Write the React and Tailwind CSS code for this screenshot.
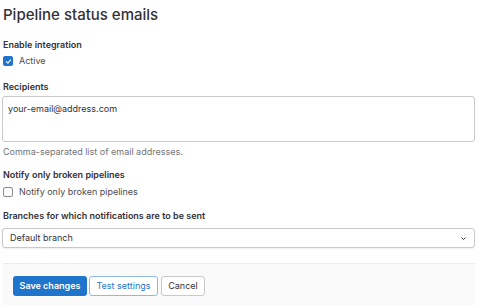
import React from "react";

const Check = () => (
  <svg viewBox="0 0 10 10" className="w-[7px] h-[7px]">
    <path d="M2 5.2 L4.1 7.2 L8 2.8" fill="none" stroke="white" strokeWidth="1.6" strokeLinecap="round" strokeLinejoin="round" />
  </svg>
);

const Label = ({ children, className = "" }) => (
  <div className={`h-[12px] leading-[12px] text-[9px] font-semibold text-[#333238] ${className}`}>{children}</div>
);

const App = () => {
  return (
    <div className="w-[486px] h-[305px] overflow-hidden bg-white font-['Inter',sans-serif] text-[#333238]">
      <div className="ml-[3px] w-[472px] pt-[3px]">
        <h1 className="h-[24px] leading-[24px] text-[15px] font-medium">
          Pipeline status emails
        </h1>

        <Label className="mt-[12px]">Enable integration</Label>
        <label className="mt-[4px] flex h-[12px] items-center gap-[6px]">
          <span className="flex w-[10px] h-[10px] items-center justify-center rounded-[2px] bg-[#1f75cb]">
            <Check />
          </span>
          <span className="text-[9px] leading-[12px] text-[#4c4b51]">Active</span>
        </label>

        <Label className="mt-[14px]">Recipients</Label>
        <div className="mt-[3px] -ml-[1px] h-[46px] rounded-[3px] border border-[#c9c9cc] px-[5px] pt-[6px] text-[9px] leading-[12px] text-[#333238]">
          your-email@address.com
        </div>
        <div className="mt-[4px] h-[12px] leading-[12px] text-[9px] text-[#737278]">
          Comma-separated list of email addresses.
        </div>

        <Label className="mt-[11px]">Notify only broken pipelines</Label>
        <label className="mt-[5px] flex h-[12px] items-center gap-[6px]">
          <span className="w-[10px] h-[10px] rounded-[2px] border border-[#89888d] bg-white" />
          <span className="text-[9px] leading-[12px] text-[#4c4b51]">Notify only broken pipelines</span>
        </label>

        <Label className="mt-[12px]">Branches for which notifications are to be sent</Label>
        <div className="mt-[6px] -ml-[1px] flex h-[20px] items-center justify-between rounded-[3px] border border-[#c9c9cc] pl-[7px] pr-[7px] shadow-[0_1px_1px_rgba(0,0,0,0.06)]">
          <span className="text-[9px] leading-[12px] text-[#333238]">Default branch</span>
          <svg viewBox="0 0 10 10" className="w-[7px] h-[7px]">
            <path d="M2.5 4 L5 6.5 L7.5 4" fill="none" stroke="#333238" strokeWidth="1.4" strokeLinecap="round" strokeLinejoin="round" />
          </svg>
        </div>

        <div className="mt-[15px] h-[60px] border-t border-[#ececef] bg-[#fafafa] pl-[10px] pt-[12px]">
          <div className="flex gap-[2px]">
            <button className="h-[20px] w-[74px] rounded-[3px] bg-[#1f75cb] text-[9px] font-semibold text-white">
              Save changes
            </button>
            <button className="h-[20px] w-[69px] rounded-[3px] border border-[#8fb8e8] bg-white text-[9px] text-[#1f75cb]">
              Test settings
            </button>
            <button className="ml-[1px] h-[20px] w-[44px] rounded-[3px] border border-[#c9c9cc] bg-white text-[9px] text-[#333238]">
              Cancel
            </button>
          </div>
        </div>
      </div>
    </div>
  );
};

export default App;
